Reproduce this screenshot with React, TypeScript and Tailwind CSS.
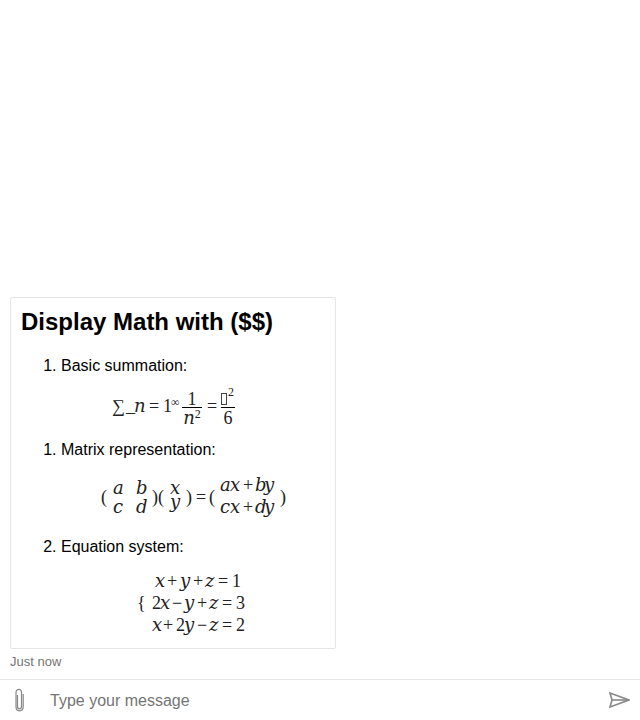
import React from "react";

type P = { c?: string; children?: React.ReactNode };
const N = ({ c = "", children }: P) => <span className={"block shrink-0 " + c}>{children}</span>;
const V = ({ c = "", children }: P) => <span className={"block shrink-0 font-['DejaVu_Serif',serif] text-[18px] italic " + c}>{children}</span>;
const Row = ({ c = "", children }: P) => <div className={"flex items-center leading-[18px] " + c}>{children}</div>;
const Sup = ({ c = "", children }: P) => <span className={"mb-[8px] block shrink-0 text-[12px] leading-[12px] " + c}>{children}</span>;

function Eq1() {
  return (
    <Row c="h-[36px] pb-[4px] pl-[91px]">
      <N c="w-[14px]">∑</N>
      <N c="w-[8px]">_</N>
      <V c="w-[15px]">n</V>
      <N c="w-[14px]">=</N>
      <N c="w-[8px]">1</N>
      <Sup c="w-[11px]">∞</Sup>
      <div className="mt-[4px] flex w-[20px] shrink-0 flex-col items-center">
        <div className="h-[18px] w-full border-b border-black text-center">1</div>
        <div className="flex h-[18px] items-center pt-[2px]">
          <V>n</V>
          <Sup>2</Sup>
        </div>
      </div>
      <N c="ml-[5px] w-[14px]">=</N>
      <div className="mt-[4px] flex w-[14px] shrink-0 flex-col items-center">
        <div className="flex h-[18px] w-full items-end border-b border-black pb-[1px]">
          <span aria-label="π" className="mb-[1px] block h-[12px] w-[6px] shrink-0 border border-[#444]"></span>
          <Sup c="mb-[4px] ml-[1px]">2</Sup>
        </div>
        <div className="h-[18px] pt-[1px]">6</div>
      </div>
    </Row>
  );
}

function Eq2() {
  return (
    <Row c="mt-[16px] mb-[19px] h-[44px] pl-[80px]">
      <N c="w-[12px]">(</N>
      <div className="flex w-[39px] shrink-0 flex-col">
        <div className="flex h-[19px] items-center"><V c="w-[23px]">a</V><V>b</V></div>
        <div className="flex h-[19px] items-center"><V c="w-[23px]">c</V><V>d</V></div>
      </div>
      <N c="w-[6px]">)</N>
      <N c="w-[9px]">(</N>
      <div className="mb-[5px] flex w-[16px] shrink-0 flex-col items-center">
        <V c="h-[14px] leading-[14px]">x</V>
        <V c="h-[14px] leading-[14px]">y</V>
      </div>
      <N c="ml-[3px] w-[10px]">)</N>
      <N c="w-[13px]">=</N>
      <N c="w-[11px]">(</N>
      <div className="mb-[2px] flex w-[60px] shrink-0 flex-col">
        <div className="flex h-[22px] items-center"><V c="w-[10px]">a</V><V c="w-[13px]">x</V><N c="w-[12px]">+</N><V c="w-[9px]">b</V><V>y</V></div>
        <div className="flex h-[22px] items-center"><V c="w-[10px]">c</V><V c="w-[13px]">x</V><N c="w-[12px]">+</N><V c="w-[9px]">d</V><V>y</V></div>
      </div>
      <N>)</N>
    </Row>
  );
}

function Eq3() {
  return (
    <Row c="mt-[14px] mb-[12px] h-[66px] pl-[116px]">
      <N c="w-[15px]">{"{"}</N>
      <div className="flex shrink-0 flex-col">
        <div className="flex h-[22px] items-center pl-[3px]">
          <V c="w-[12px]">x</V><N c="w-[13px]">+</N><V c="w-[13px]">y</V><N c="w-[12px]">+</N><V c="w-[13px]">z</V><N c="w-[14px]">=</N><N>1</N>
        </div>
        <div className="flex h-[22px] items-center">
          <N c="w-[8px]">2</N><V c="w-[12px]">x</V><N c="w-[12px]">−</N><V c="w-[13px]">y</V><N c="w-[12px]">+</N><V c="w-[13px]">z</V><N c="w-[14px]">=</N><N>3</N>
        </div>
        <div className="flex h-[22px] items-center">
          <V c="w-[11px]">x</V><N c="w-[13px]">+</N><N c="w-[8px]">2</N><V c="w-[13px]">y</V><N c="w-[12px]">−</N><V c="w-[13px]">z</V><N c="w-[14px]">=</N><N>2</N>
        </div>
      </div>
    </Row>
  );
}

export default function App() {
  return (
    <div className="flex h-[720px] flex-col bg-white font-['Liberation_Sans',Arial,sans-serif] text-black">
      <div className="flex flex-1 flex-col items-start justify-end px-[10px] pb-[10px]">
        <div className="w-[326px] rounded-[2px] border border-[#e5e5e5] bg-white p-[10px] pb-0">
          <h1 className="mb-[21px] text-2xl leading-[28px] font-bold">Display Math with ($$)</h1>
          <ol className="list-decimal pl-[40px] text-base leading-[18px]"><li>Basic summation:</li></ol>
          <div className="my-[15px] font-['Liberation_Serif',serif] text-[18px] text-[#222]"><Eq1 /></div>
          <ol className="list-decimal pl-[40px] text-base leading-[18px]"><li>Matrix representation:</li></ol>
          <div className="font-['Liberation_Serif',serif] text-[18px] text-[#222]"><Eq2 /></div>
          <ol start={2} className="list-decimal pl-[40px] text-base leading-[18px]"><li>Equation system:</li></ol>
          <div className="font-['Liberation_Serif',serif] text-[18px] text-[#222]"><Eq3 /></div>
        </div>
        <div className="mt-[5px] text-[13px] leading-[15px] text-[#757575]">Just now</div>
      </div>
      <div className="flex h-[41px] items-center border-t border-[#e5e5e5]">
        <svg className="ml-[13px] h-[24px] w-[13px]" viewBox="0 0 13 24" fill="none" stroke="#888" strokeWidth="1.2">
          <path d="M4.5 7v11.5c0 1.5.9 2.3 2 2.3s2-.8 2-2.3V4.5c0-2-1-3.2-2.6-3.2S3 2.6 3 4.5v14c0 2.8 1.5 4.3 3.5 4.3s3.7-1.5 3.7-4.3V6" />
        </svg>
        <input
          className="mt-[1px] ml-[24px] flex-1 bg-transparent text-base outline-none placeholder:text-[#757575]"
          placeholder="Type your message"
        />
        <svg className="mr-[10px] h-[16px] w-[21px]" viewBox="0 0 21 16" fill="none" stroke="#888" strokeWidth="1.6">
          <path d="M1 1l19 7-19 7 2-7z" />
          <path d="M3 8h17" />
        </svg>
      </div>
    </div>
  );
}
